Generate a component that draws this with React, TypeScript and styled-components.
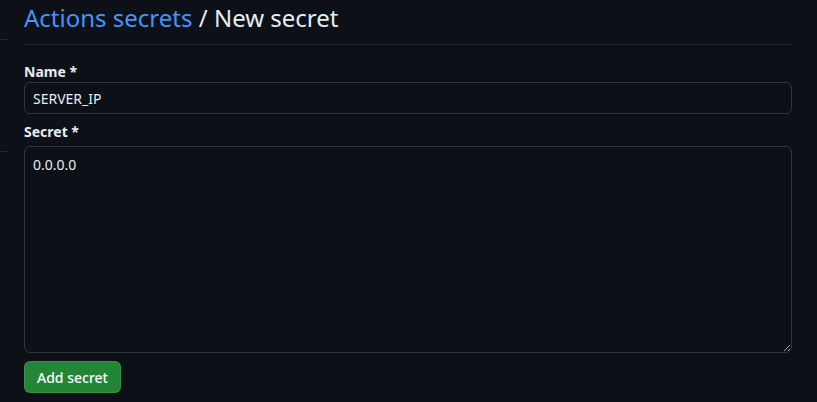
import React from 'react'
import styled, { createGlobalStyle } from 'styled-components'

const Global = createGlobalStyle`
  html, body {
    margin: 0;
    padding: 0;
    background-color: #0d1117;
  }
  body {
    font-family: "Noto Sans", "Liberation Sans", sans-serif;
    color: #e6edf3;
    font-size: 14px;
    line-height: 20px;
  }
`

const App = () => {
  return (
    <>
      <Global />
      <Page>
        <Sidebar>
          <NavItem $height={39} />
          <NavItem $height={111} />
        </Sidebar>
        <Main>
          <Title>
            <TitleLink href="#">Actions secrets</TitleLink> / New secret
          </Title>
          <Form>
            <Label htmlFor="name">Name *</Label>
            <Input id="name" defaultValue="SERVER_IP" />
            <Label htmlFor="secret" $gap={4} $top={8}>Secret *</Label>
            <Area id="secret" defaultValue="0.0.0.0" />
            <Button type="button">Add secret</Button>
          </Form>
        </Main>
      </Page>
    </>
  )
}

export default App

const Page = styled.div`
    display: flex;
    gap: 16px;
    width: 817px;
    height: 402px;
    overflow: hidden;
`
const Sidebar = styled.div`
    width: 8px;
    flex-shrink: 0;
    display: flex;
    flex-direction: column;
`
const NavItem = styled.div<{ $height: number }>`
    height: ${p => p.$height}px;
    border-bottom: 1px solid #21262d;
`
const Main = styled.div`
    width: 768px;
    display: flex;
    flex-direction: column;
`
const Title = styled.h2`
    margin: 0;
    font-size: 24px;
    line-height: 36px;
    font-weight: 400;
    color: #e6edf3;
    padding-bottom: 8px;
    border-bottom: 1px solid #21262d;
`
const TitleLink = styled.a`
    color: #4493f8;
    text-decoration: none;
`
const Form = styled.form`
    display: flex;
    flex-direction: column;
    padding-top: 17px;
`
const Label = styled.label<{ $gap?: number; $top?: number }>`
    font-weight: 700;
    font-size: 14px;
    line-height: 20px;
    color: #e6edf3;
    margin-top: ${p => p.$top ?? 0}px;
    margin-bottom: ${p => p.$gap ?? 0}px;
`
const Input = styled.input`
    box-sizing: border-box;
    height: 32px;
    padding: 5px 8px;
    font-family: inherit;
    font-size: 14px;
    line-height: 20px;
    color: #e6edf3;
    background-color: #0d1117;
    border: 1px solid #30363d;
    border-radius: 6px;
    outline: none;
`
const Area = styled.textarea`
    box-sizing: border-box;
    height: 207px;
    padding: 8px;
    font-family: inherit;
    font-size: 14px;
    line-height: 20px;
    color: #e6edf3;
    background-color: #0d1117;
    border: 1px solid #30363d;
    border-radius: 6px;
    outline: none;
    resize: both;
    color-scheme: dark;
`
const Button = styled.button`
    align-self: flex-start;
    margin-top: 8px;
    height: 32px;
    padding: 0 12px;
    font-family: inherit;
    font-size: 14px;
    font-weight: 500;
    color: #ffffff;
    background-color: #238636;
    border: 1px solid rgba(240, 246, 252, 0.1);
    border-radius: 6px;
    cursor: pointer;
`
